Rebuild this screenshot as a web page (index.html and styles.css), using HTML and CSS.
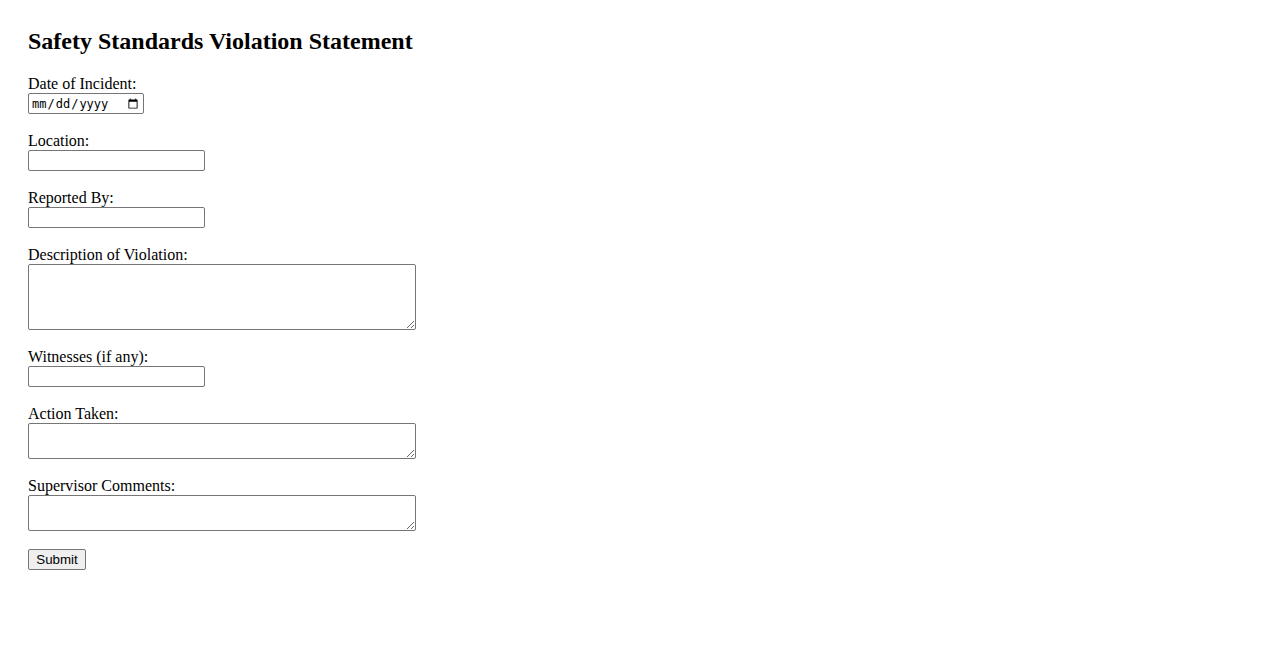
FILE: index.html
```html
<!DOCTYPE html>
<html lang="en">
<head>
<meta charset="utf-8">
<title>Safety Standards Violation Statement</title>
<link rel="stylesheet" href="styles.css">
</head>
<body>
<div class="page">
  <h2 class="title">Safety Standards Violation Statement</h2>
  <form class="form">
    <div class="field">
      <label class="label" for="date">Date of Incident:</label>
      <input class="input input-date" type="date" id="date">
    </div>
    <div class="field">
      <label class="label" for="location">Location:</label>
      <input class="input input-text" type="text" id="location">
    </div>
    <div class="field">
      <label class="label" for="reported">Reported By:</label>
      <input class="input input-text" type="text" id="reported">
    </div>
    <div class="field">
      <label class="label" for="desc">Description of Violation:</label>
      <textarea class="area area-tall" id="desc" rows="4"></textarea>
    </div>
    <div class="field">
      <label class="label" for="witnesses">Witnesses (if any):</label>
      <input class="input input-text" type="text" id="witnesses">
    </div>
    <div class="field">
      <label class="label" for="action">Action Taken:</label>
      <textarea class="area area-short" id="action" rows="2"></textarea>
    </div>
    <div class="field">
      <label class="label" for="comments">Supervisor Comments:</label>
      <textarea class="area area-short" id="comments" rows="2"></textarea>
    </div>
    <button class="submit" type="submit">Submit</button>
  </form>
</div>
</body>
</html>
```

FILE: styles.css
```css
html, body {
  margin: 0;
  padding: 0;
  background: #ffffff;
}

body {
  font-family: "Liberation Serif", "Times New Roman", serif;
  font-size: 16px;
  color: #000000;
}

.page {
  padding: 28px;
}

.title {
  margin: 0 0 20px 0;
  font-size: 24px;
  line-height: 27px;
  font-weight: bold;
}

.form {
  margin: 0;
}

.field {
  margin-bottom: 18px;
}

.label {
  display: block;
  line-height: 18px;
  height: 18px;
}

.input,
.area {
  display: block;
  box-sizing: border-box;
  margin: 0;
  border: 1px solid #767676;
  border-radius: 2px;
  background: #ffffff;
  color: #000000;
}

.input-text {
  width: 177px;
  height: 21px;
  padding: 1px 2px;
  font-family: "Liberation Sans", Arial, sans-serif;
  font-size: 13.333px;
}

.input-date {
  width: 116px;
  height: 21px;
  padding: 1px 2px;
  font-family: "DejaVu Sans Mono", "Liberation Mono", monospace;
  font-size: 12px;
}

.area {
  width: 388px;
  padding: 2px;
  font-family: "Liberation Mono", "Courier New", monospace;
  font-size: 13.333px;
  resize: both;
}

.area-tall {
  height: 66px;
}

.area-short {
  height: 36px;
}

.submit {
  display: block;
  box-sizing: border-box;
  width: 58px;
  height: 21px;
  margin: 0;
  padding: 1px 6px;
  border: 1px solid #767676;
  border-radius: 2px;
  background: #efefef;
  color: #000000;
  font-family: "Liberation Sans", Arial, sans-serif;
  font-size: 13.333px;
}
```
